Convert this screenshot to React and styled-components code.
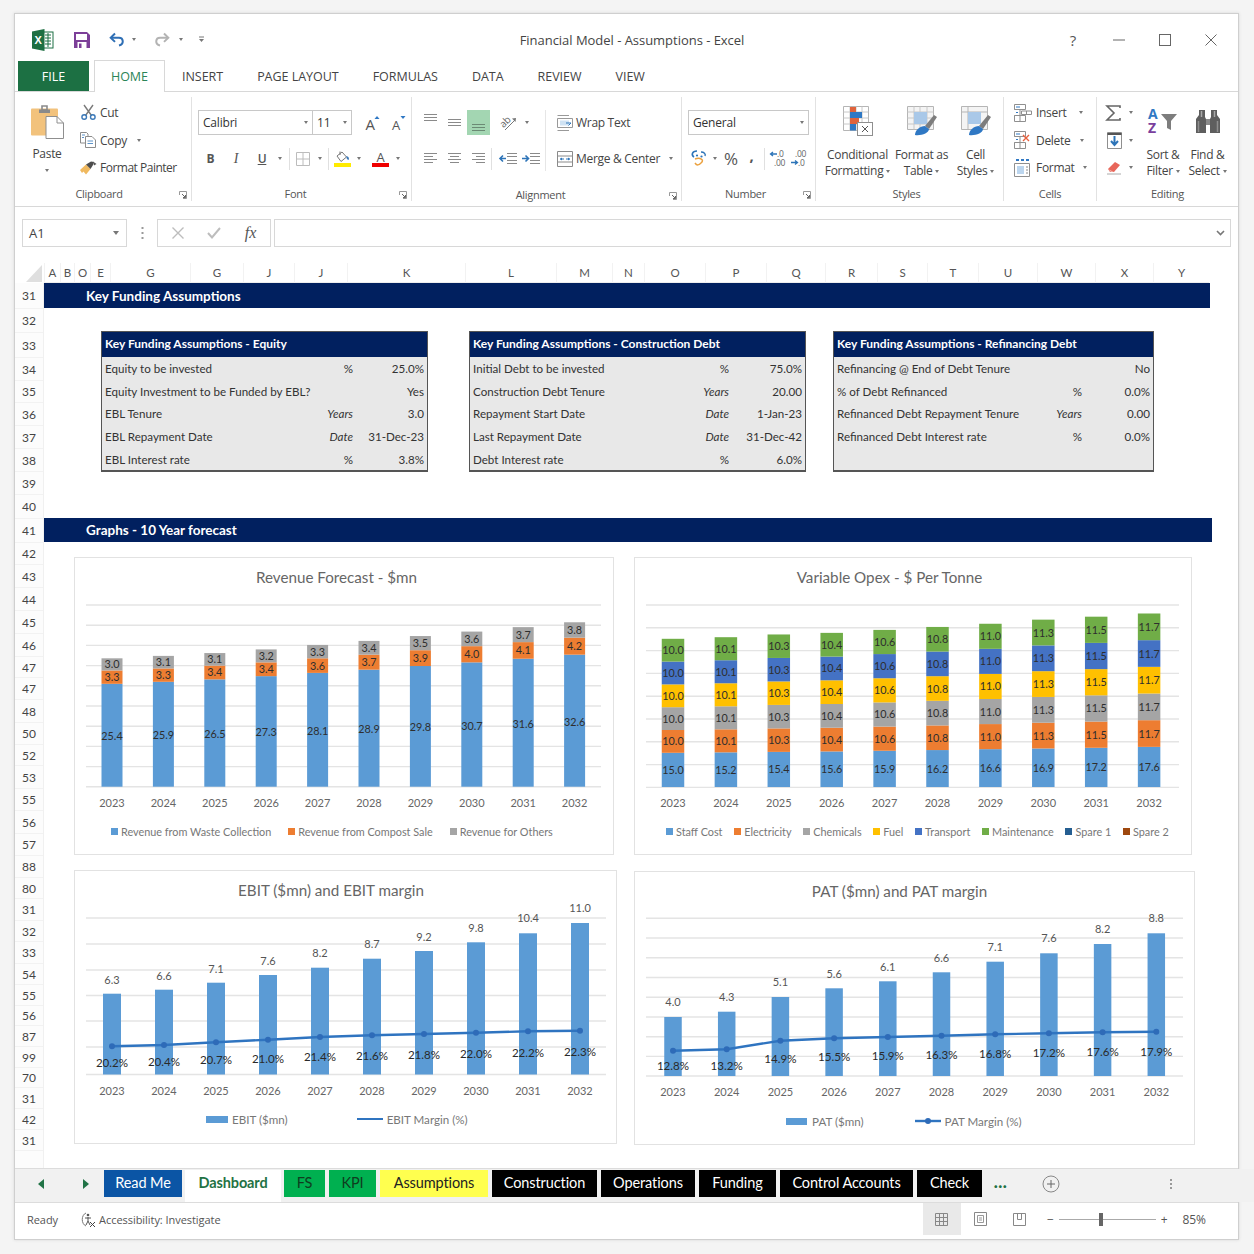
import React from "react";
import styled, { createGlobalStyle } from "styled-components";

const UI = `"Open Sans", "Noto Sans", sans-serif`;
const CELL = `Lato, "Liberation Sans", sans-serif`;
const NAVY = "#01205f";

const Global = createGlobalStyle`
  html, body { margin: 0; padding: 0; background: #f3f3f3; }
  * { box-sizing: border-box; }
  svg { overflow: visible; }
`;

const Page = styled.div`
  width: 1254px; height: 1254px; padding: 13px 15px 14px 14px; background: #f4f4f4; overflow: hidden;
`;
const Window = styled.div`
  width: 1225px; height: 1227px; display: flex; flex-direction: column; background: #fff;
  border: 1px solid #cfcfcf; box-shadow: 0 0 3px #d8d8d8; font-family: ${UI}; color: #444;
`;

/* Title bar */
const TitleBar = styled.header`
  height: 46px; display: flex; align-items: center; flex: none; padding-top: 5px;
`;
const Quick = styled.div`
  width: 199px; display: flex; align-items: center; padding-left: 16px;
`;
const QuickBtn = styled.span`
  width: ${p => p.$w}px; margin-left: ${p => p.$ml || 0}px; display: flex; justify-content: center; align-items: center; flex: none;
`;
const Title = styled.div`
  flex: 1; text-align: center; font-size: 13px; letter-spacing: -0.03px; color: #444;
`;
const WinCtrls = styled.div`
  width: 188px; display: flex; align-items: center; color: #555;
`;
const WinBtn = styled.span`
  width: 46px; flex: none; display: flex; justify-content: center; font-size: 15px;
`;

/* Ribbon tabs */
const TabRow = styled.nav`
  height: 32px; flex: none; display: flex; padding-left: 3px; align-items: stretch;
  border-bottom: 1px solid #d8d8d8; font-size: 12.5px; letter-spacing: -0.03px; position: relative;
`;
const FileTab = styled.div`
  width: 71px; margin: 1px 5px 0 0; background: #1c7043; color: #fff; display: flex;
  align-items: center; justify-content: center; padding-top: 1px;
`;
const RibbonTab = styled.div`
  padding: 1px ${p => (p.$active ? 16 : 17)}px 0; display: flex; align-items: center;
  ${p => p.$active && `
    background:#fff; color:#2a8457; margin-bottom:-1px; border:1px solid #d8d8d8; border-bottom:none; width:71px; justify-content:center; padding:0 0 1px;
  `}
`;

/* Ribbon */
const Ribbon = styled.div`
  height: 115px; flex: none; display: flex; border-bottom: 1px solid #d8d8d8; padding-top: 5px;
  font-size: 12px; letter-spacing: -0.3px; color: #444;
`;
const Group = styled.section`
  width: ${p => p.$w}px; flex: none; height: 104px; display: flex; flex-direction: column;
  border-right: ${p => (p.$last ? "none" : "1px solid #e2e2e2")};
`;
const GroupBody = styled.div`
  height: 90px; display: flex; padding-left: ${p => p.$pad || 0}px;
`;
const GroupFoot = styled.div`
  height: 16px; display: flex; align-items: center; font-size: 11px; color: #555;
`;
const GroupName = styled.div`
  flex: 1; text-align: center; padding-left: ${p => p.$nudge || 0}px; padding-right: ${p => p.$nudgeR || 0}px;
`;
const Launcher = styled.svg`
  width: 8px; height: 8px; margin: 3px 4px 0 0; flex: none;
`;
const Big = styled.div`
  width: ${p => p.$w}px; flex: none; display: flex; flex-direction: column; align-items: center;
  padding-top: ${p => p.$top ?? 9}px;
`;
const BigIcon = styled.div`
  height: ${p => p.$h || 30}px; display: flex; align-items: center; justify-content: center; margin-bottom: ${p => p.$mb ?? 11}px;
`;
const BigLabel = styled.div`
  text-align: center; line-height: 16px; white-space: nowrap;
`;
const Caret = styled.span`
  display: inline-block; flex: none; width: 0; height: 0; vertical-align: middle;
  margin-left: ${p => p.$ml ?? 0}px;
  border-left: ${p => p.$big ? 3.5 : 2.5}px solid transparent; border-right: ${p => p.$big ? 3.5 : 2.5}px solid transparent;
  border-top: ${p => p.$big ? 4 : 3}px solid #777;
`;
const CaretSlot = styled.span`
  width: ${p => p.$w || 10}px; height: ${p => p.$h ? p.$h + "px" : "auto"}; flex: none; display: flex; justify-content: center; align-items: center;
`;
const Stack = styled.div`
  display: flex; flex-direction: column; padding-top: 2px; margin-left: ${p => p.$ml || 0}px; width: ${p => p.$w ? p.$w + "px" : "auto"}; flex: none;
`;
const StackItem = styled.div`
  height: 27.5px; display: flex; align-items: center; gap: ${p => p.$gap ?? 4}px; white-space: nowrap;
`;
const Tight = styled.span`
  letter-spacing: -0.5px;
`;
const IconSlot = styled.span`
  width: ${p => p.$w || 16}px; flex: none; display: flex; justify-content: center; align-items: center;
`;
const Rows = styled.div`
  display: flex; flex-direction: column; padding-top: 13px; gap: 11px;
`;
const ToolRow = styled.div`
  height: 25px; display: flex; align-items: center;
`;
const Tool = styled.span`
  width: ${p => p.$w || 24}px; height: 25px; flex: none; display: flex; justify-content: center; align-items: ${p => p.$al || "center"};
  margin-left: ${p => p.$ml || 0}px; padding: ${p => p.$pad || 0};
  background: ${p => (p.$active ? "#a3d6b2" : "transparent")}; color: #555;
  font-family: ${p => (p.$serif ? `"Liberation Serif", serif` : "inherit")};
  font-size: ${p => p.$fs || 12}px; font-weight: ${p => p.$fw || 400}; font-style: ${p => p.$it ? "italic" : "normal"};
  text-decoration: ${p => p.$ul ? "underline" : "none"};
`;
const VSep = styled.span`
  width: 1px; height: 22px; background: #e0e0e0; flex: none; margin: 0 ${p => p.$m ?? 3}px;
`;
const Select = styled.div`
  width: ${p => p.$w}px; height: 25px; flex: none; border: 1px solid #c8c8c8; display: flex; align-items: center; margin-left: ${p => p.$ml || 0}px;
  justify-content: space-between; padding: 0 4px; font-size: 12px; color: #333; background: #fff; letter-spacing: -0.2px;
`;
const LabelText = styled.span`
  margin-left: ${p => p.$ml || 0}px; white-space: nowrap;
`;
const AlignLeft = styled.div`
  width: 134px; padding-left: 6px; border-right: 1px solid #e6e6e6; margin: 13px 0 16px;
`;
const AlignInner = styled(Rows)`
  padding-top: 0;
`;
const AlignRight = styled(Rows)`
  padding-left: 11px;
`;

/* Formula bar */
const FormulaBar = styled.div`
  height: 56px; flex: none; display: flex; align-items: flex-start; padding: 12px 7px 0 7px; gap: 3px;
`;
const NameBox = styled.div`
  width: 105px; height: 28px; border: 1px solid #d8d8d8; display: flex; align-items: center; justify-content: space-between;
  padding: 0 7px 0 6px; font-size: 13px; color: #444; flex: none;
`;
const GripDots = styled.div`
  width: 24px; height: 28px; flex: none; display: flex; align-items: center; justify-content: center;
`;
const FxBox = styled.div`
  width: 114px; height: 28px; border: 1px solid #d8d8d8; display: flex; align-items: center; justify-content: space-around;
  flex: none; padding: 0 2px;
`;
const FxText = styled.span`
  font-family: "Liberation Serif", serif; font-style: italic; font-size: 16px; color: #555;
`;
const Input = styled.div`
  flex: 1; height: 28px; border: 1px solid #d8d8d8; display: flex; align-items: center; justify-content: flex-end; padding-right: 5px;
`;

/* Sheet */
const Sheet = styled.main`
  flex: 1; min-height: 0; display: flex; flex-direction: column; font-family: ${CELL};
`;
const ColBar = styled.div`
  height: 20px; flex: none; display: flex;
`;
const Corner = styled.div`
  width: 29px; flex: none; display: flex; justify-content: flex-end; align-items: flex-end; padding: 0 2px 1px 0;
`;
const ColHead = styled.div`
  width: ${p => p.$w}px; flex: none; display: flex; justify-content: center; align-items: center; font-size: 11.5px; color: #555;
  border-left: 1px solid #f2f2f2; border-bottom: 1px solid #eee;
`;
const SheetBody = styled.div`
  flex: 1; display: flex; min-height: 0;
`;
const RowHeads = styled.div`
  width: 29px; flex: none; display: flex; flex-direction: column; border-right: 1px solid #f0f0f0; background: #fcfcfc;
`;
const RowHead = styled.div`
  height: ${p => p.$h}px; flex: none; display: flex; align-items: center; justify-content: center; font-size: 12px; color: #444;
  border-bottom: 1px solid #f2f2f2;
`;
const Content = styled.div`
  flex: 1; min-width: 0;
`;
const SectionBar = styled.div`
  height: ${p => p.$h}px; width: ${p => p.$w}px; background: ${NAVY}; color: #fff; font-weight: 700; font-size: 13.5px;
  display: flex; align-items: center; padding-left: 42px; margin-top: ${p => p.$mt || 0}px;
`;
const Tables = styled.div`
  display: flex; align-items: flex-start; padding-left: 57px; margin-top: 23px; height: 141px;
`;
const KTable = styled.div`
  width: ${p => p.$w}px; margin-left: ${p => p.$ml || 0}px; flex: none; border: 1px solid #555; border-bottom-width: 2px; background: #e8e8e8; height: 141px;
`;
const KHead = styled.div`
  height: 25px; background: ${NAVY}; color: #fff; font-weight: 700; font-size: 12px; display: flex; align-items: center; padding: 0 0 2px 3px;
`;
const KGrid = styled.div`
  display: grid; grid-template-columns: 1fr 0 ${p => p.$v}px; grid-auto-rows: 22.7px; padding: 0 3px 0 3px; font-size: 11.6px; color: #333;
`;
const KLabel = styled.div`
  display: flex; align-items: center; white-space: nowrap;
`;
const KUnit = styled(KLabel)`
  width: 0; justify-self: end; justify-content: flex-end; font-style: ${p => (p.$it ? "italic" : "normal")};
`;
const KValue = styled(KLabel)`
  justify-content: flex-end;
`;
const ChartRow = styled.div`
  display: flex; gap: ${p => p.$gap}px; padding-left: 30px; margin-top: ${p => p.$mt}px;
`;
const ChartCard = styled.div`
  width: ${p => p.$w}px; height: ${p => p.$h}px; flex: none; border: 1px solid #e2e2e2; background: #fff; margin-top: ${p => p.$mt || 0}px;
`;
const ChartTitle = styled.div`
  height: ${p => p.$h}px; display: flex; align-items: center; justify-content: center; font-size: 15.2px; color: #666;
  padding: 0 ${p => p.$pr || 0}px 3px 0;
`;
const PlotSvg = styled.svg`
  display: block; overflow: visible; font-family: ${CELL};
`;
const Legend = styled.div`
  height: ${p => p.$h}px; display: flex; align-items: center; padding-left: ${p => p.$pad}px; gap: ${p => p.$gap}px; color: #777; white-space: nowrap;
`;
const LegendItem = styled.span`
  display: flex; align-items: center; gap: ${p => p.$gap ?? 3}px; font-size: ${p => p.$fs || 10.85}px;
`;
const Swatch = styled.span`
  width: ${p => p.$w || 7}px; height: ${p => p.$h || 7}px; background: ${p => p.$c}; flex: none;
`;

/* Sheet tabs */
const TabsBar = styled.div`
  height: 35px; flex: none; display: flex; align-items: flex-start; border-top: 1px solid #dcdcdc; font-family: ${CELL};
  border-bottom: 1px solid #dcdcdc; padding-right: 56px;
`;
const TabsInner = styled.div`
  flex: 1; height: 33px; background: #f1f1f1; display: flex; align-items: flex-start; padding-top: 1px;
`;
const NavBtn = styled.span`
  width: ${p => p.$w}px; height: 27px; display: flex; align-items: center; justify-content: center; flex: none;
`;
const SheetTab = styled.div`
  width: ${p => p.$w}px; height: ${p => (p.$active ? 32 : 27)}px; flex: none; margin-right: ${p => p.$mr ?? 4}px; background: ${p => p.$bg}; color: ${p => p.$fg};
  font-size: 14.5px; font-weight: ${p => (p.$active ? 700 : 400)}; display: flex; align-items: center; justify-content: center;
  padding-bottom: ${p => (p.$active ? 7 : 2)}px; white-space: nowrap; letter-spacing: -0.1px;
`;
const More = styled.span`
  width: 35px; margin-left: 1px; height: 27px; text-align: center; color: #1f7244; font-weight: 900; font-size: 17px; line-height: 24px; letter-spacing: 0.5px;
`;

/* Status bar */
const Status = styled.footer`
  height: 36px; flex: none; display: flex; align-items: center; font-size: 11px; color: #555; letter-spacing: -0.05px;
`;
const StatusText = styled.span`
  margin: 0 0 3px ${p => p.$ml || 0}px; white-space: nowrap;
`;
const StatusIcon = styled.svg`
  margin: 0 0 3px 22px; flex: none;
`;
const ViewBtns = styled.div`
  margin-left: auto; display: flex; align-items: center; height: 36px;
`;
const ViewBtn = styled.span`
  width: ${p => p.$w}px; height: 32px; margin-bottom: 4px; display: flex; align-items: center; justify-content: center; background: ${p => (p.$on ? "#e9e9e9" : "transparent")};
`;
const Zoom = styled.div`
  display: flex; align-items: center; margin-left: 8px; padding-right: 32px; gap: 5px; font-size: 12px;
`;
const ZoomSign = styled.span`
  margin-bottom: 3px;
`;
const Track = styled.div`
  width: 97px; height: 1px; background: #aaa; position: relative; margin-bottom: 3px;
`;
const Thumb = styled.span`
  position: absolute; left: 40px; top: -6px; width: 4px; height: 13px; background: #666;
`;

/* icons ------------------------------------------------ */
const Launch = () => (
  <Launcher viewBox="0 0 8 8"><path d="M.5 .5H7.5V7.5H4M.5 .5V4" fill="none" stroke="#999" /><path d="M3 3L6.5 6.5M6.5 4V6.5H4" fill="none" stroke="#666" /></Launcher>
);
const ExcelLogo = () => (
  <svg width="22" height="22" viewBox="0 0 22 22">
    <rect x="10" y="3" width="11" height="16" fill="#fff" stroke="#1d6f42" />
    <path d="M13 6h6M13 9h6M13 12h6M13 15h6M16 4v14" stroke="#1d6f42" strokeWidth="1" />
    <path d="M0 2.6L12.5 0V22L0 19.4Z" fill="#1d6f42" />
    <text x="6.2" y="15" textAnchor="middle" fontSize="11" fontWeight="700" fill="#fff" fontFamily="Liberation Sans">X</text>
  </svg>
);
const SaveIcon = () => (
  <svg width="16" height="17" viewBox="0 0 16 17">
    <path d="M0 1H13L16 4V17H0Z" fill="#7c3f98" />
    <rect x="2" y="3" width="11" height="6" fill="#fff" />
    <rect x="3.5" y="11" width="9" height="6" fill="#fff" />
    <rect x="5" y="12.5" width="2.5" height="4.5" fill="#7c3f98" />
  </svg>
);
const Arrow = ({ flip, c }) => (
  <svg width="16" height="15" viewBox="0 0 16 15">
    <g transform={flip ? "matrix(-1 0 0 1 16 0)" : undefined}>
      <path d="M6 1.5L1.7 5.7L6 9.9" fill="none" stroke={c} strokeWidth="2" />
      <path d="M2 5.7H10C14.5 5.7 15.5 12 10 13.5" fill="none" stroke={c} strokeWidth="2" />
    </g>
  </svg>
);
const Customize = () => (
  <svg width="7" height="7" viewBox="0 0 7 7"><path d="M1 1H6" stroke="#777" /><path d="M1 3H6L3.5 6Z" fill="#777" /></svg>
);
const PasteIcon = () => (
  <svg width="33" height="34" viewBox="0 0 33 34">
    <rect x="0" y="3.5" width="27" height="27" rx="1" fill="#f2c27c" />
    <path d="M8 4.5H19V8H8Z" fill="#8a8a8a" /><path d="M11 1H16V5H11Z" fill="none" stroke="#8a8a8a" strokeWidth="1.6" />
    <path d="M15 11.5H26L32.5 18V33.5H15Z" fill="#fff" stroke="#8f8f8f" /><path d="M26 11.5V18H32.5" fill="none" stroke="#8f8f8f" />
  </svg>
);
const CutIcon = () => (
  <svg width="15" height="15" viewBox="0 0 15 15">
    <path d="M3 0L10.5 10.5M12 0L4.5 10.5" stroke="#7a7a7a" strokeWidth="1.4" />
    <circle cx="3.2" cy="12" r="2.3" fill="none" stroke="#3a78b8" strokeWidth="1.4" /><circle cx="11.8" cy="12" r="2.3" fill="none" stroke="#3a78b8" strokeWidth="1.4" />
  </svg>
);
const CopyIcon = () => (
  <svg width="16" height="16" viewBox="0 0 16 16">
    <path d="M.5 .5H6.5L8 2V11H.5Z" fill="#fff" stroke="#8c8c8c" />
    <path d="M5.5 4.5H12L15.5 8V15.5H5.5Z" fill="#fff" stroke="#8c8c8c" />
    <path d="M7.5 9H13M7.5 11.5H13" stroke="#5d93c9" /><path d="M2 3H5M2 5.5H4" stroke="#5d93c9" />
  </svg>
);
const PainterIcon = () => (
  <svg width="17" height="14" viewBox="0 0 17 14">
    <path d="M0 9L6 3.5L10.5 8L6 13.5L3.5 10.5L2 12Z" fill="#f0b95f" />
    <path d="M6 3.5L11 0.5L14 1L13 4L10.5 8Z" fill="#4d4d4d" /><path d="M13 .5L16.5 3L14 4.5Z" fill="#555" />
  </svg>
);
const FontA = ({ up, c }) => (
  <svg width="16" height="16" viewBox="0 0 16 16">
    <text x="6" y="15" textAnchor="middle" fontSize={up ? 15 : 13} fill="#555" fontFamily="Open Sans">A</text>
    <path d={up ? "M10.5 4L13 1L15.5 4Z" : "M10.5 1H15.5L13 4Z"} fill={c} />
  </svg>
);
const BordersIcon = () => (
  <svg width="14" height="14" viewBox="0 0 14 14"><path d="M.5 .5H13.5V13.5H.5ZM7 .5V13.5M.5 7H13.5" fill="none" stroke="#bcbcbc" strokeWidth="1" /></svg>
);
const FillIcon = () => (
  <svg width="17" height="17" viewBox="0 0 17 17">
    <path d="M3 6L8 2L12.5 7L7 11.5Z" fill="#fff" stroke="#777" /><path d="M6 1.5V5" stroke="#777" />
    <path d="M12.5 6C15 7 15.5 8.5 14.5 10C13 9.5 12 8 12.5 6Z" fill="#3a78b8" />
    <rect x="0" y="13" width="17" height="4" fill="#ffeb00" />
  </svg>
);
const ColorAIcon = () => (
  <svg width="17" height="17" viewBox="0 0 17 17">
    <text x="8.5" y="12" textAnchor="middle" fontSize="13" fill="#555" fontFamily="Open Sans">A</text>
    <rect x="0" y="13" width="17" height="4" fill="#ef0000" />
  </svg>
);
const Lines = ({ rows, w = 15, h = 13, c = "#8a8a8a" }) => (
  <svg width={w} height={h} viewBox={`0 0 ${w} ${h}`}>
    {rows.map(([a, b, y], i) => <path key={i} d={`M${a} ${y + 0.5}H${b}`} stroke={c} strokeWidth="1" />)}
  </svg>
);
const OrientIcon = () => (
  <svg width="17" height="17" viewBox="0 0 17 17">
    <text x="6" y="11" fontSize="10" fill="#666" fontFamily="Open Sans" transform="rotate(-45 6 9)" textAnchor="middle">ab</text>
    <path d="M5 16L15 6" stroke="#777" /><path d="M12 4.5L16 4L15.5 8Z" fill="#777" />
  </svg>
);
const WrapIcon = () => (
  <svg width="16" height="16" viewBox="0 0 16 16">
    <path d="M.5 .5H12M.5 3.5H15.5V12.5H.5ZM.5 15.5H12" fill="none" stroke="#999" />
    <rect x="3" y="5.5" width="9" height="5" fill="#cfe2f3" /><path d="M9 8H14M14 8L11.5 10.5" stroke="#2d74b8" fill="none" />
  </svg>
);
const MergeIcon = () => (
  <svg width="16" height="16" viewBox="0 0 16 16">
    <path d="M.5 .5H15.5V15.5H.5ZM.5 5H15.5M.5 11H15.5" fill="none" stroke="#8a8a8a" />
    <path d="M3 8H7M9 8H13" stroke="#2d74b8" /><path d="M3 8L5 6.5V9.5ZM13 8L11 6.5V9.5Z" fill="#2d74b8" />
  </svg>
);
const IndentIcon = ({ out }) => (
  <svg width="18" height="13" viewBox="0 0 18 13">
    <path d="M8 1.5H18M8 4.5H18M8 8.5H18M8 11.5H18" stroke="#8a8a8a" />
    {out ? <path d="M7 6.5H1M4 3.5L1 6.5L4 9.5" fill="none" stroke="#2d74b8" strokeWidth="1.6" /> : <path d="M0 6.5H6M3.5 3.5L6.5 6.5L3.5 9.5" fill="none" stroke="#2d74b8" strokeWidth="1.6" />}
  </svg>
);
const AcctIcon = () => (
  <svg width="16" height="17" viewBox="0 0 16 17">
    <path d="M6 1C1 1 0 5 3 7" fill="none" stroke="#2d74b8" strokeWidth="1.6" /><path d="M10 2C13 2 15 4 14 6" fill="none" stroke="#2d74b8" strokeWidth="1.4" />
    <circle cx="6" cy="5.5" r="1.1" fill="#2d74b8" /><circle cx="10.5" cy="6.5" r="1.1" fill="#2d74b8" />
    <path d="M4 9C9 7 14 10 10 13C8 15 6 16 4 13" fill="none" stroke="#eba13f" strokeWidth="1.5" />
  </svg>
);
const DecIcon = ({ inc }) => (
  <svg width="20" height="17" viewBox="0 0 20 17" fontFamily="Open Sans" fontSize="8.5" fill="#666">
    {inc ? <>
      <text x="5" y="7">.00</text><text x="8" y="16">.0</text><path d="M1 12.5H7.5M5 10.5L7.5 12.5L5 14.5" fill="none" stroke="#2d74b8" strokeWidth="1.3" />
    </> : <>
      <text x="8" y="7">.0</text><text x="5" y="16">.00</text><path d="M8 4H1.5M4 2L1.5 4L4 6" fill="none" stroke="#2d74b8" strokeWidth="1.3" />
    </>}
  </svg>
);
const CondIcon = () => (
  <svg width="30" height="30" viewBox="0 0 30 30">
    <path d="M.5 .5H25.5V24.5H.5Z" fill="#fff" stroke="#b5b5b5" />
    <path d="M7 .5V24.5M13 .5V24.5M19 .5V24.5M.5 6H25.5M.5 12H25.5M.5 18H25.5" stroke="#c8c8c8" />
    <rect x="7" y="1" width="6" height="5" fill="#e0633b" /><rect x="7" y="6" width="12" height="6" fill="#2f78c4" /><rect x="7" y="12" width="9" height="6" fill="#e0633b" /><rect x="7" y="18" width="6" height="6.5" fill="#2f78c4" />
    <rect x="14.5" y="16.5" width="15" height="13" fill="#fff" stroke="#8f8f8f" />
    <path d="M19 26L25 20M19 20L25 26" stroke="#555" />
  </svg>
);
const TableIcon = ({ cell }) => (
  <svg width="30" height="30" viewBox="0 0 30 30">
    <path d="M.5 .5H26.5V23.5H.5Z" fill="#f4f4f4" stroke="#b5b5b5" />
    {cell ? <path d="M.5 6H26.5M7 .5V23.5" stroke="#b5b5b5" /> : <path d="M.5 6H26.5M.5 12H26.5M.5 18H26.5M7 .5V23.5M13 .5V23.5M20 .5V23.5" stroke="#c8c8c8" />}
    <rect x="7" y="6" width="13" height="12" fill="#a9c8e8" />
    <path d="M18 20L27 9L30 11L22 23Z" fill="#7d7d7d" />
    <path d="M8 29C8 24 13 20 18 20L22 23C22 27 14 30 8 29Z" fill="#2f78c4" />
  </svg>
);
const CellIcon = ({ kind }) => (
  <svg width="18" height="18" viewBox="0 0 18 18">
    {kind === "f" ? <>
      <path d="M.5 4.5H15.5V17.5H.5Z" fill="#fff" stroke="#8f8f8f" /><path d="M2 1H5M7 1H10M12 1H15" stroke="#2f78c4" strokeWidth="2" />
      <rect x="3" y="7" width="7" height="8" fill="#bcd6ef" /><path d="M12 8H14M12 11H14M12 14H14" stroke="#888" />
    </> : <>
      <path d="M.5 .5H11.5V5.5H.5ZM.5 11.5H11.5V17.5H.5ZM6 11.5V17.5M.5 5.5H6V11.5H.5" fill="none" stroke="#8f8f8f" />
      {kind === "i" ? <path d="M7.5 7H17.5V10.5H7.5ZM12.5 7V10.5" fill="#fff" stroke="#8f8f8f" /> : <path d="M9 4L15 10M15 4L9 10" stroke="#e8603d" strokeWidth="1.4" />}
      <path d="M2 3H6M2 8.5H4" stroke="#2f78c4" />
    </>}
  </svg>
);
const FillDown = () => (
  <svg width="15" height="17" viewBox="0 0 15 17">
    <path d="M.5 .5H14.5V16.5H.5Z" fill="#fff" stroke="#8f8f8f" /><path d="M.5 2H14.5" stroke="#555" strokeWidth="2" />
    <path d="M7.5 4V12M4 9L7.5 13L11 9" fill="none" stroke="#2d74b8" strokeWidth="2" />
  </svg>
);
const Eraser = () => (
  <svg width="15" height="14" viewBox="0 0 15 14">
    <path d="M1 8L8 1L13 4L7 11H3Z" fill="#e8665a" /><path d="M1 8L4 11H7" fill="#f3b3ac" /><path d="M0 13H14" stroke="#aaa" />
  </svg>
);
const SortIcon = () => (
  <svg width="30" height="28" viewBox="0 0 30 28" fontFamily="Open Sans" fontWeight="700" fontSize="14">
    <text x="0" y="12" fill="#2f78c4">A</text><text x="0" y="26" fill="#7a3f9d">Z</text>
    <path d="M13 7H29L23 14V23L19 21V14Z" fill="#7d7d7d" />
  </svg>
);
const Binoculars = () => (
  <svg width="24" height="23" viewBox="0 0 24 23">
    <path d="M3 0H9V7L10 9V23H0V9L3 5Z" fill="#5e5e5e" /><path d="M21 0H15V7L14 9V23H24V9L21 5Z" fill="#5e5e5e" />
    <rect x="10" y="9" width="4" height="6" fill="#8a8a8a" />
    <path d="M5.5 1V7M18.5 1V7" stroke="#a8a8a8" strokeWidth="1.5" /><path d="M2.5 11V22M21.5 11V22" stroke="#8f8f8f" strokeWidth="1.5" />
  </svg>
);
const Tri = ({ right }) => (
  <svg width="6" height="10" viewBox="0 0 6 10"><path d={right ? "M0 0L6 5L0 10Z" : "M6 0L0 5L6 10Z"} fill="#217346" /></svg>
);

/* data ------------------------------------------------- */
const rowList = [
  ["31", 26], ["32", 24], ["33", 25], ["34", 23], ["35", 22], ["36", 23], ["37", 23], ["38", 23], ["39", 23], ["40", 24], ["41", 24], ["42", 22], ["43", 23],
  ["44", 23], ["45", 23], ["46", 23], ["47", 21], ["47", 22], ["48", 23], ["50", 22], ["52", 21], ["53", 23], ["55", 22], ["56", 23], ["57", 22], ["88", 22], ["80", 21],
  ["31", 22], ["32", 21], ["33", 22], ["54", 21], ["55", 21], ["56", 20], ["87", 21], ["99", 21], ["70", 20], ["31", 21], ["42", 21], ["31", 21],
];
const cols = [["A", 16], ["B", 14], ["O", 16], ["E", 20], ["G", 80], ["G", 53], ["J", 51], ["J", 53], ["K", 118], ["L", 91], ["M", 56], ["N", 32], ["O", 61], ["P", 61], ["Q", 59], ["R", 52], ["S", 50], ["T", 51], ["U", 59], ["W", 58], ["X", 58], ["Y", 56]];

const tables = [
  { w: 327, v: 71, title: "Key Funding Assumptions - Equity", rows: [["Equity to be invested", "%", "25.0%"], ["Equity Investment to be Funded by EBL?", "", "Yes"], ["EBL Tenure", "Years", "3.0"], ["EBL Repayment Date", "Date", "31-Dec-23"], ["EBL Interest rate", "%", "3.8%"]] },
  { w: 337, ml: 41, v: 73, title: "Key Funding Assumptions - Construction Debt", rows: [["Initial Debt to be invested", "%", "75.0%"], ["Construction Debt Tenure", "Years", "20.00"], ["Repayment Start Date", "Date", "1-Jan-23"], ["Last Repayment Date", "Date", "31-Dec-42"], ["Debt Interest rate", "%", "6.0%"]] },
  { w: 321, ml: 27, v: 68, title: "Key Funding Assumptions - Refinancing Debt", rows: [["Refinancing @ End of Debt Tenure", "", "No"], ["% of Debt Refinanced", "%", "0.0%"], ["Refinanced Debt Repayment Tenure", "Years", "0.00"], ["Refinanced Debt Interest rate", "%", "0.0%"], ["", "", ""]] },
];

const years = [2023, 2024, 2025, 2026, 2027, 2028, 2029, 2030, 2031, 2032];
const BLUE = "#5b9bd5", ORANGE = "#ed7d31", GRAY = "#a5a5a5", GOLD = "#ffc000", BLUE2 = "#4472c4", GREEN = "#70ad47", NAVY2 = "#255e91", RUST = "#9e480e";

const revenue = [
  { c: BLUE, v: [25.4, 25.9, 26.5, 27.3, 28.1, 28.9, 29.8, 30.7, 31.6, 32.6] },
  { c: ORANGE, v: [3.3, 3.3, 3.4, 3.4, 3.6, 3.7, 3.9, 4.0, 4.1, 4.2] },
  { c: GRAY, v: [3.0, 3.1, 3.1, 3.2, 3.3, 3.4, 3.5, 3.6, 3.7, 3.8] },
];
const same = [10.0, 10.1, 10.3, 10.4, 10.6, 10.8, 11.0, 11.3, 11.5, 11.7];
const opex = [
  { c: BLUE, v: [15.0, 15.2, 15.4, 15.6, 15.9, 16.2, 16.6, 16.9, 17.2, 17.6] },
  { c: ORANGE, v: same }, { c: GRAY, v: same }, { c: GOLD, v: same }, { c: BLUE2, v: same }, { c: GREEN, v: same },
];

const ebit = {
  x0: 112, dx: 52, bw: 18, base: 1074.5, vals: ["6.3", "6.6", "7.1", "7.6", "8.2", "8.7", "9.2", "9.8", "10.4", "11.0"],
  tops: [993.7, 989.7, 982.7, 975, 967.7, 958.7, 951, 942.3, 933.3, 923],
  labelY: [979.7, 975.7, 968.7, 960.7, 953.3, 944.3, 936.7, 928.3, 918.3, 908.3],
  line: [1046.3, 1045, 1042.3, 1039.7, 1037, 1035.3, 1034, 1032.7, 1031.3, 1030.7],
  pct: ["20.2%", "20.4%", "20.7%", "21.0%", "21.4%", "21.6%", "21.8%", "22.0%", "22.2%", "22.3%"],
  pctY: [1062.7, 1061.7, 1060, 1058.7, 1057.3, 1056, 1055, 1054, 1053, 1052.3],
  yearY: 1091, grid: [918, 944, 970, 995.5, 1021, 1047, 1074.5], gx: [86, 606],
};
const pat = {
  x0: 673, dx: 53.7, bw: 17.5, base: 1076, vals: ["4.0", "4.3", "5.1", "5.6", "6.1", "6.6", "7.1", "7.6", "8.2", "8.8"],
  tops: [1017, 1011.7, 997, 988.3, 981.3, 972.3, 961.7, 953.3, 944, 933.3],
  labelY: [1002.3, 997, 982.3, 973.7, 966.7, 957.7, 947, 938.3, 929.3, 918.3],
  line: [1050.7, 1049.3, 1040.7, 1038.3, 1037, 1035.7, 1034.3, 1033.3, 1032.3, 1031.7],
  pct: ["12.8%", "13.2%", "14.9%", "15.5%", "15.9%", "16.3%", "16.8%", "17.2%", "17.6%", "17.9%"],
  pctY: [1066.3, 1065.7, 1059, 1057.3, 1056, 1054.7, 1054, 1053, 1052, 1052],
  yearY: 1092, grid: [918.3, 938, 957.8, 977.5, 997.3, 1017, 1036.7, 1056.4, 1076], gx: [646, 1183],
};

/* charts ------------------------------------------------ */
const Stacked = ({ left, width, top, height, series, x0, dx, bw, base, unit, grid, gx }) => (
  <PlotSvg width={width} height={height} viewBox={`${left} ${top} ${width} ${height}`}>
    {grid.map((y, i) => <line key={i} x1={gx[0]} x2={gx[1]} y1={y} y2={y} stroke="#e4e4e4" strokeWidth="1.4" />)}
    {years.map((yr, i) => {
      let y = base;
      const cx = x0 + dx * i;
      return (
        <g key={yr}>
          {series.map((s, j) => {
            const h = s.v[i] * unit;
            y -= h;
            return (
              <g key={j}>
                <rect x={cx - bw / 2} y={y} width={bw} height={h} fill={s.c} />
                <text x={cx} y={y + h / 2 + (j === 0 && series.length === 3 ? 1 : 0)} dy="4" textAnchor="middle" fontSize="10.8" fill="#2e2e2e">{s.v[i].toFixed(1)}</text>
              </g>
            );
          })}
          <text x={cx} y={base + 20} textAnchor="middle" fontSize="11" fill="#666">{yr}</text>
        </g>
      );
    })}
  </PlotSvg>
);

const Combo = ({ left, width, top, height, d }) => {
  const xs = years.map((_, i) => d.x0 + d.dx * i);
  return (
    <PlotSvg width={width} height={height} viewBox={`${left} ${top} ${width} ${height}`}>
      {d.grid.map((y, i) => <line key={i} x1={d.gx[0]} x2={d.gx[1]} y1={y} y2={y} stroke="#e4e4e4" strokeWidth="1.4" />)}
      {xs.map((x, i) => (
        <g key={i}>
          <rect x={x - d.bw / 2} y={d.tops[i]} width={d.bw} height={d.base - d.tops[i]} fill={BLUE} />
          <text x={x} y={d.labelY[i]} dy="4" textAnchor="middle" fontSize="11" fill="#555">{d.vals[i]}</text>
          <text x={x} y={d.yearY + 4} textAnchor="middle" fontSize="11" fill="#666">{years[i]}</text>
        </g>
      ))}
      <polyline points={xs.map((x, i) => `${x},${d.line[i]}`).join(" ")} fill="none" stroke="#2f74c0" strokeWidth="2.4" />
      {xs.map((x, i) => (
        <g key={i}>
          <circle cx={x} cy={d.line[i]} r="3" fill="#2e6bb8" />
          <text x={x} y={d.pctY[i]} dy="4" textAnchor="middle" fontSize="11.6" fill="#2a2a2a">{d.pct[i]}</text>
        </g>
      ))}
    </PlotSvg>
  );
};

const range = (a, step, n) => Array.from({ length: n }, (_, i) => a + step * i);
const barLines = [[1, 14, 1], [1, 14, 4], [1, 14, 7]];

export default function App() {
  return (
    <Page>
      <Global />
      <Window>
        <TitleBar>
          <Quick>
            <QuickBtn $w={24}><ExcelLogo /></QuickBtn>
            <QuickBtn $w={18} $ml={18}><SaveIcon /></QuickBtn>
            <QuickBtn $w={18} $ml={17}><Arrow c="#2f6fb5" /></QuickBtn>
            <QuickBtn $w={10} $ml={3}><Caret /></QuickBtn>
            <QuickBtn $w={18} $ml={14}><Arrow flip c="#b3b3b3" /></QuickBtn>
            <QuickBtn $w={10} $ml={5}><Caret /></QuickBtn>
            <QuickBtn $w={10} $ml={10}><Customize /></QuickBtn>
          </Quick>
          <Title>Financial Model - Assumptions - Excel</Title>
          <WinCtrls>
            <WinBtn>?</WinBtn>
            <WinBtn><svg width="12" height="12" viewBox="0 0 12 12"><path d="M0 6H12" stroke="#666" /></svg></WinBtn>
            <WinBtn><svg width="12" height="12" viewBox="0 0 12 12"><rect x=".5" y=".5" width="11" height="11" fill="none" stroke="#666" /></svg></WinBtn>
            <WinBtn><svg width="12" height="12" viewBox="0 0 12 12"><path d="M.5 .5L11.5 11.5M11.5 .5L.5 11.5" stroke="#666" /></svg></WinBtn>
          </WinCtrls>
        </TitleBar>

        <TabRow>
          <FileTab>FILE</FileTab>
          <RibbonTab $active>HOME</RibbonTab>
          {["INSERT", "PAGE LAYOUT", "FORMULAS", "DATA", "REVIEW", "VIEW"].map(t => <RibbonTab key={t}>{t}</RibbonTab>)}
        </TabRow>

        <Ribbon>
          <Group $w={177}>
            <GroupBody $pad={13}>
              <Big $w={38} $top={7}>
                <BigIcon $h={35} $mb={7}><PasteIcon /></BigIcon>
                <BigLabel>Paste</BigLabel>
                <CaretSlot $w={10} $h={17}><Caret /></CaretSlot>
              </Big>
              <Stack $ml={14}>
                <StackItem><IconSlot><CutIcon /></IconSlot>Cut</StackItem>
                <StackItem><IconSlot><CopyIcon /></IconSlot>Copy<Caret $ml={6} /></StackItem>
                <StackItem><IconSlot><PainterIcon /></IconSlot><Tight>Format Painter</Tight></StackItem>
              </Stack>
            </GroupBody>
            <GroupFoot><GroupName $nudge={4}>Clipboard</GroupName><Launch /></GroupFoot>
          </Group>

          <Group $w={220}>
            <GroupBody $pad={6}>
              <Rows>
                <ToolRow>
                  <Select $w={115}>Calibri<Caret /></Select>
                  <Select $w={40} $ml={-1}>11<Caret /></Select>
                  <Tool $w={22} $ml={9}><FontA up c="#2f78c4" /></Tool>
                  <Tool $w={22} $ml={4}><FontA c="#2f78c4" /></Tool>
                </ToolRow>
                <ToolRow>
                  <Tool $w={25} $fw={700}>B</Tool>
                  <Tool $w={26} $serif $it $fs={14}>I</Tool>
                  <Tool $w={26} $ul $fw={600}>U</Tool>
                  <CaretSlot $w={10}><Caret /></CaretSlot>
                  <VSep $m={4} />
                  <Tool $w={22} $ml={-2}><BordersIcon /></Tool>
                  <CaretSlot $w={12}><Caret /></CaretSlot>
                  <VSep $m={2} />
                  <Tool $w={22}><FillIcon /></Tool>
                  <CaretSlot $w={12}><Caret /></CaretSlot>
                  <Tool $w={22} $ml={4}><ColorAIcon /></Tool>
                  <CaretSlot $w={14}><Caret /></CaretSlot>
                </ToolRow>
              </Rows>
            </GroupBody>
            <GroupFoot><GroupName>Font</GroupName><Launch /></GroupFoot>
          </Group>

          <Group $w={270}>
            <GroupBody>
              <AlignLeft>
                <AlignInner>
                  <ToolRow>
                    <Tool $al="flex-start" $pad="3px 0 0"><Lines rows={barLines} h={9} /></Tool>
                    <Tool><Lines rows={barLines} h={9} /></Tool>
                    <Tool $active $al="flex-end" $pad="0 0 3px" $ml={1} $w={23}><Lines rows={barLines} h={9} c="#6b8a74" /></Tool>
                    <Tool $w={27} $ml={5}><OrientIcon /></Tool>
                    <CaretSlot $w={9}><Caret /></CaretSlot>
                  </ToolRow>
                  <ToolRow>
                    <Tool><Lines rows={[[1, 14, 1], [1, 10, 4], [1, 14, 7], [1, 10, 10]]} /></Tool>
                    <Tool><Lines rows={[[1, 14, 1], [3, 12, 4], [1, 14, 7], [3, 12, 10]]} /></Tool>
                    <Tool><Lines rows={[[1, 14, 1], [5, 14, 4], [1, 14, 7], [5, 14, 10]]} /></Tool>
                    <VSep $m={1} />
                    <Tool $w={22} $ml={4}><IndentIcon out /></Tool>
                    <Tool $w={23}><IndentIcon /></Tool>
                  </ToolRow>
                </AlignInner>
              </AlignLeft>
              <AlignRight>
                <ToolRow><IconSlot><WrapIcon /></IconSlot><LabelText $ml={3}>Wrap Text</LabelText></ToolRow>
                <ToolRow><IconSlot><MergeIcon /></IconSlot><LabelText $ml={3}>Merge &amp; Center</LabelText><Caret $ml={9} /></ToolRow>
              </AlignRight>
            </GroupBody>
            <GroupFoot><GroupName>Alignment</GroupName><Launch /></GroupFoot>
          </Group>

          <Group $w={134}>
            <GroupBody $pad={6}>
              <Rows>
                <ToolRow><Select $w={121}>General<Caret /></Select></ToolRow>
                <ToolRow>
                  <Tool $w={22}><AcctIcon /></Tool>
                  <CaretSlot $w={10}><Caret /></CaretSlot>
                  <Tool $w={22} $fs={17}>%</Tool>
                  <Tool $w={19} $fw={700} $fs={15} $pad="0 0 8px">,</Tool>
                  <VSep $m={3} />
                  <Tool $w={21}><DecIcon /></Tool>
                  <Tool $w={21}><DecIcon inc /></Tool>
                </ToolRow>
              </Rows>
            </GroupBody>
            <GroupFoot><GroupName $nudge={6}>Number</GroupName><Launch /></GroupFoot>
          </Group>

          <Group $w={188}>
            <GroupBody $pad={5}>
              <Big $w={73}><BigIcon><CondIcon /></BigIcon><BigLabel>Conditional<br />Formatting <Caret /></BigLabel></Big>
              <Big $w={55}><BigIcon><TableIcon /></BigIcon><BigLabel>Format as<br />Table <Caret /></BigLabel></Big>
              <Big $w={53}><BigIcon><TableIcon cell /></BigIcon><BigLabel>Cell<br />Styles <Caret /></BigLabel></Big>
            </GroupBody>
            <GroupFoot><GroupName $nudgeR={6}>Styles</GroupName></GroupFoot>
          </Group>

          <Group $w={93}>
            <GroupBody $pad={10}>
              <Stack>
                <StackItem $gap={4}><IconSlot $w={18}><CellIcon kind="i" /></IconSlot>Insert<Caret $ml={8} /></StackItem>
                <StackItem $gap={4}><IconSlot $w={18}><CellIcon kind="d" /></IconSlot>Delete<Caret $ml={6} /></StackItem>
                <StackItem $gap={4}><IconSlot $w={18}><CellIcon kind="f" /></IconSlot>Format<Caret $ml={4} /></StackItem>
              </Stack>
            </GroupBody>
            <GroupFoot><GroupName>Cells</GroupName></GroupFoot>
          </Group>

          <Group $w={141} $last>
            <GroupBody $pad={9}>
              <Stack $w={36}>
                <StackItem $gap={7}><IconSlot><svg width="16" height="16" viewBox="0 0 16 16"><path d="M14 3V1H1L8 8L1 15H14V13" fill="none" stroke="#666" strokeWidth="1.6" /></svg></IconSlot><Caret /></StackItem>
                <StackItem $gap={7}><IconSlot><FillDown /></IconSlot><Caret /></StackItem>
                <StackItem $gap={7}><IconSlot><Eraser /></IconSlot><Caret /></StackItem>
              </Stack>
              <Big $w={42} $top={9}><BigIcon $h={30}><SortIcon /></BigIcon><BigLabel>Sort &amp;<br />Filter <Caret /></BigLabel></Big>
              <Big $w={47} $top={9}><BigIcon $h={30}><Binoculars /></BigIcon><BigLabel>Find &amp;<br />Select <Caret /></BigLabel></Big>
            </GroupBody>
            <GroupFoot><GroupName>Editing</GroupName></GroupFoot>
          </Group>
        </Ribbon>

        <FormulaBar>
          <NameBox>A1<Caret $big /></NameBox>
          <GripDots><svg width="3" height="12" viewBox="0 0 3 12"><path d="M1.5 0V2M1.5 5V7M1.5 10V12" stroke="#999" strokeWidth="2" /></svg></GripDots>
          <FxBox>
            <svg width="12" height="12" viewBox="0 0 12 12"><path d="M.5 .5L11.5 11.5M11.5 .5L.5 11.5" stroke="#bdbdbd" strokeWidth="1.4" /></svg>
            <svg width="14" height="12" viewBox="0 0 14 12"><path d="M1 6L5 10.5L13 1" fill="none" stroke="#bdbdbd" strokeWidth="2" /></svg>
            <FxText>fx</FxText>
          </FxBox>
          <Input><svg width="9" height="6" viewBox="0 0 9 6"><path d="M1 1L4.5 4.5L8 1" fill="none" stroke="#777" strokeWidth="1.6" /></svg></Input>
        </FormulaBar>

        <Sheet>
          <ColBar>
            <Corner><svg width="16" height="17" viewBox="0 0 16 17"><path d="M16 0V17H0Z" fill="#dfdfdf" /></svg></Corner>
            {cols.map(([c, w], i) => <ColHead key={i} $w={w}>{c}</ColHead>)}
          </ColBar>
          <SheetBody>
            <RowHeads>
              {rowList.map(([l, h], i) => <RowHead key={i} $h={h}>{l}</RowHead>)}
            </RowHeads>
            <Content>
              <SectionBar $h={25} $w={1166}>Key Funding Assumptions</SectionBar>
              <Tables>
                {tables.map(t => (
                  <KTable key={t.title} $w={t.w} $ml={t.ml}>
                    <KHead>{t.title}</KHead>
                    <KGrid $v={t.v}>
                      {t.rows.map((r, i) => (
                        <React.Fragment key={i}>
                          <KLabel>{r[0]}</KLabel>
                          <KUnit $it={r[1] !== "%"}>{r[1]}</KUnit>
                          <KValue>{r[2]}</KValue>
                        </React.Fragment>
                      ))}
                    </KGrid>
                  </KTable>
                ))}
              </Tables>
              <SectionBar $h={24} $w={1168} $mt={46}>Graphs - 10 Year forecast</SectionBar>

              <ChartRow $gap={20} $mt={15}>
                <ChartCard $w={540} $h={298}>
                  <ChartTitle $h={41} $pr={15}>Revenue Forecast - $mn</ChartTitle>
                  <Stacked left={75} width={538} top={599} height={216} series={revenue} x0={112} dx={51.4} bw={21} base={786.7} unit={4.05} grid={range(605, 20.2, 10)} gx={[86, 601]} />
                  <Legend $h={32} $pad={36} $gap={17}>
                    <LegendItem><Swatch $c={BLUE} />Revenue from Waste Collection</LegendItem>
                    <LegendItem><Swatch $c={ORANGE} />Revenue from Compost Sale</LegendItem>
                    <LegendItem><Swatch $c={GRAY} />Revenue for Others</LegendItem>
                  </Legend>
                </ChartCard>
                <ChartCard $w={558} $h={298}>
                  <ChartTitle $h={41} $pr={47}>Variable Opex - $ Per Tonne</ChartTitle>
                  <Stacked left={635} width={556} top={599} height={216} series={opex} x0={673} dx={52.9} bw={22.5} base={787} unit={2.28} grid={range(605, 22.8, 9)} gx={[646, 1179]} />
                  <Legend $h={32} $pad={31} $gap={11.7}>
                    <LegendItem><Swatch $c={BLUE} />Staff Cost</LegendItem>
                    <LegendItem><Swatch $c={ORANGE} />Electricity</LegendItem>
                    <LegendItem><Swatch $c={GRAY} />Chemicals</LegendItem>
                    <LegendItem><Swatch $c={GOLD} />Fuel</LegendItem>
                    <LegendItem><Swatch $c={BLUE2} />Transport</LegendItem>
                    <LegendItem><Swatch $c={GREEN} />Maintenance</LegendItem>
                    <LegendItem><Swatch $c={NAVY2} />Spare 1</LegendItem>
                    <LegendItem><Swatch $c={RUST} />Spare 2</LegendItem>
                  </Legend>
                </ChartCard>
              </ChartRow>

              <ChartRow $gap={17} $mt={15}>
                <ChartCard $w={543} $h={274}>
                  <ChartTitle $h={41} $pr={29}>EBIT ($mn) and EBIT margin</ChartTitle>
                  <Combo left={75} width={541} top={912} height={193} d={ebit} />
                  <Legend $h={28} $pad={131} $gap={69}>
                    <LegendItem $gap={4} $fs={11.6}><Swatch $w={22} $c={BLUE} />EBIT ($mn)</LegendItem>
                    <LegendItem $gap={4} $fs={11.6}><Swatch $w={26} $h={2.5} $c="#2f74c0" />EBIT Margin (%)</LegendItem>
                  </Legend>
                </ChartCard>
                <ChartCard $w={561} $h={274} $mt={1}>
                  <ChartTitle $h={40} $pr={30}>PAT ($mn) and PAT margin</ChartTitle>
                  <Combo left={635} width={559} top={912} height={194} d={pat} />
                  <Legend $h={30} $pad={151} $gap={51}>
                    <LegendItem $gap={5} $fs={11.6}><Swatch $w={21} $c={BLUE} />PAT ($mn)</LegendItem>
                    <LegendItem $gap={4} $fs={11.6}><svg width="26" height="8" viewBox="0 0 26 8"><path d="M0 4H26" stroke="#2f74c0" strokeWidth="2.4" /><circle cx="13" cy="4" r="3" fill="#2e6bb8" /></svg>PAT Margin (%)</LegendItem>
                  </Legend>
                </ChartCard>
              </ChartRow>
            </Content>
          </SheetBody>
        </Sheet>

        <TabsBar>
          <TabsInner>
            <NavBtn $w={52}><Tri /></NavBtn>
            <NavBtn $w={37}><Tri right /></NavBtn>
            <SheetTab $w={78} $bg="#0b55a5" $fg="#fff" $mr={3}>Read Me</SheetTab>
            <SheetTab $w={96} $bg="#fff" $fg="#1f7244" $active $mr={3}>Dashboard</SheetTab>
            <SheetTab $w={41} $bg="#00b050" $fg="#0f3d1f">FS</SheetTab>
            <SheetTab $w={47} $bg="#00b050" $fg="#0f3d1f">KPI</SheetTab>
            <SheetTab $w={108} $bg="#ffff4f" $fg="#222">Assumptions</SheetTab>
            <SheetTab $w={105} $bg="#000" $fg="#fff" $mr={4}>Construction</SheetTab>
            <SheetTab $w={94} $bg="#000" $fg="#fff">Operations</SheetTab>
            <SheetTab $w={77} $bg="#000" $fg="#fff">Funding</SheetTab>
            <SheetTab $w={133} $bg="#000" $fg="#fff">Control Accounts</SheetTab>
            <SheetTab $w={65} $bg="#000" $fg="#fff" $mr={0}>Check</SheetTab>
            <More>...</More>
            <NavBtn $w={66}><svg width="18" height="18" viewBox="0 0 18 18"><circle cx="9" cy="9" r="8" fill="none" stroke="#888" /><path d="M9 5V13M5 9H13" stroke="#666" /></svg></NavBtn>
            <NavBtn $w={174}><svg width="2" height="10" viewBox="0 0 2 10"><path d="M1 0V2M1 4V6M1 8V10" stroke="#999" strokeWidth="2" /></svg></NavBtn>
          </TabsInner>
        </TabsBar>

        <Status>
          <StatusText $ml={12}>Ready</StatusText>
          <StatusIcon width="16" height="16" viewBox="0 0 16 16">
            <path d="M6 1C1 3 1 12 6 14" fill="none" stroke="#777" /><circle cx="8" cy="3" r="1.3" fill="#555" /><path d="M5 6H11M8 5V9M6 13L8 9L10 13" fill="none" stroke="#555" /><path d="M10 10L15 15M15 10L10 15" stroke="#444" />
          </StatusIcon>
          <StatusText $ml={3}>Accessibility: Investigate</StatusText>
          <ViewBtns>
            <ViewBtn $w={38} $on><svg width="13" height="13" viewBox="0 0 13 13"><path d="M.5 .5H12.5V12.5H.5ZM4.5 .5V12.5M8.5 .5V12.5M.5 4.5H12.5M.5 8.5H12.5" fill="none" stroke="#888" /></svg></ViewBtn>
            <ViewBtn $w={39}><svg width="13" height="14" viewBox="0 0 13 14"><path d="M.5 .5H12.5V13.5H.5Z" fill="none" stroke="#888" /><path d="M3.5 3.5H9.5V10.5H3.5ZM5 6H8M5 8H8" fill="none" stroke="#999" /></svg></ViewBtn>
            <ViewBtn $w={39}><svg width="13" height="13" viewBox="0 0 13 13"><path d="M.5 .5H12.5V12.5H.5ZM4.5 .5V6.5H8.5V.5" fill="none" stroke="#888" /></svg></ViewBtn>
            <Zoom>
              <ZoomSign>−</ZoomSign>
              <Track><Thumb /></Track>
              <ZoomSign>+</ZoomSign>
              <StatusText $ml={10}>85%</StatusText>
            </Zoom>
          </ViewBtns>
        </Status>
      </Window>
    </Page>
  );
}
